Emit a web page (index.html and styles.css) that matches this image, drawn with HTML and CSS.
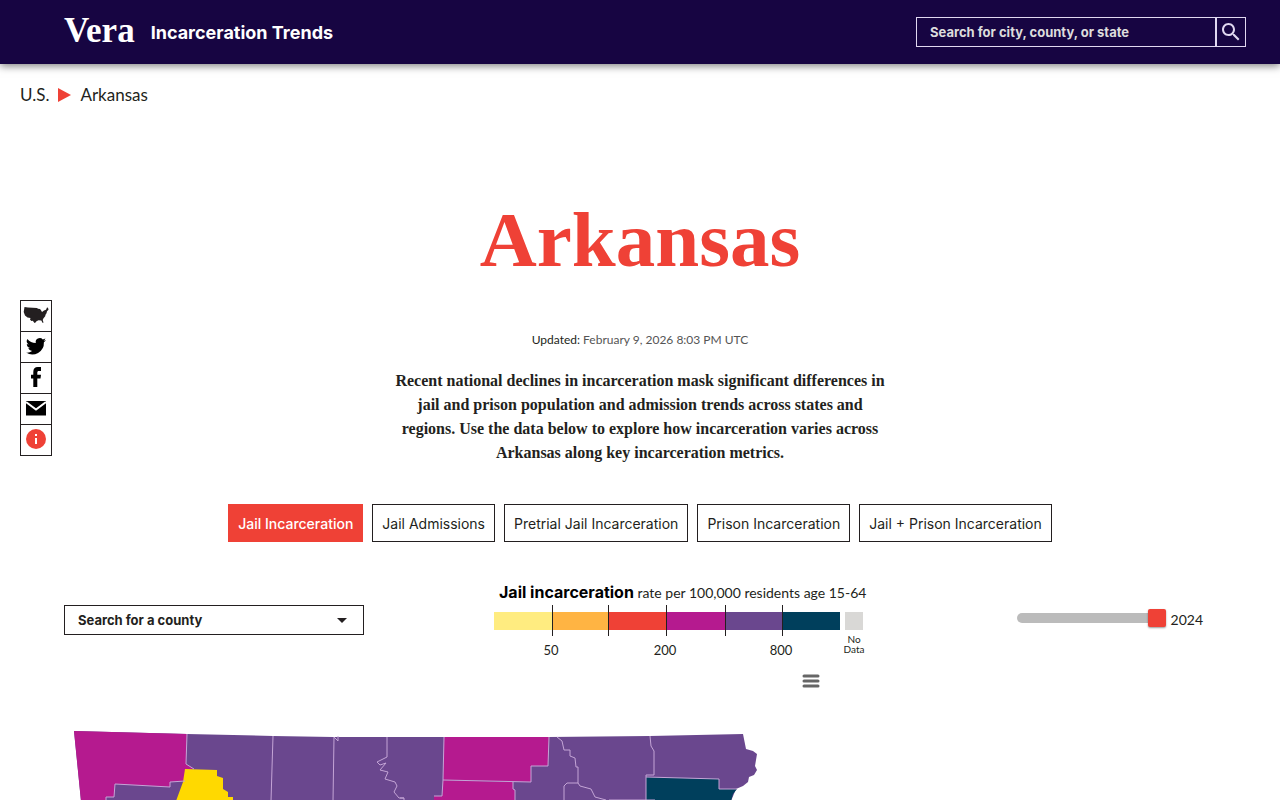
FILE: index.html
```html
<!DOCTYPE html>
<html lang="en">
<head>
    <meta charset="UTF-8">
    <meta name="viewport" content="width=device-width, initial-scale=1.0">
    <title>Arkansas - Incarceration Trends</title>
    <link rel="stylesheet" href="styles.css">
</head>
<body>
    <header class="header">
        <a class="logo" href="#">Vera</a>
        <a class="site-name" href="#">Incarceration Trends</a>
        <form class="search">
            <input type="text" class="search-input" placeholder="Search for city, county, or state" aria-label="Search for city, county, or state">
            <button type="button" class="search-btn" aria-label="Search">
                <svg width="24" height="24" viewBox="0 0 24 24" fill="currentColor"><path d="M15.5 14h-.79l-.28-.27C15.41 12.59 16 11.11 16 9.5 16 5.91 13.09 3 9.5 3S3 5.91 3 9.5 5.91 16 9.5 16c1.61 0 3.09-.59 4.23-1.57l.27.28v.79l5 4.99L20.49 19l-4.99-5zm-6 0C7.01 14 5 11.99 5 9.5S7.01 5 9.5 5 14 7.01 14 9.5 11.99 14 9.5 14z"/></svg>
            </button>
        </form>
    </header>

    <nav class="breadcrumb">
        <a href="#">U.S.</a>
        <span class="arrow"></span>
        <a href="#">Arkansas</a>
    </nav>

    <div class="share">
        <a href="#" aria-label="National map">
            <svg width="26" height="20" viewBox="0 0 26 20" fill="#231f20"><path d="M1.500 1L5 1.500 14 2l1 .7 2 .3 1 1.300 1 1.700 2-1.500 2-.8 1-2.200 1 .2.500 2-1.500 1.500-.5 2-1 1.500-.3 1.600-1.700 2-.8 1.700.8 2.500-.8.500-1.400-2.500-2.800-.3-2 1-1.500 1.800-.7-.2-1.500-2-1.500.3-1.300-1.600L7.500 12 4.500 11.500 2 9.500.7 6z"/></svg>
        </a>
        <a href="#" aria-label="Twitter">
            <svg width="24" height="24" viewBox="0 0 24 24"><path d="M22 5c-.7.300-1.500.6-2.400.7.900-.5 1.500-1.300 1.800-2.300-.8.500-1.700.8-2.600 1a4.100 4.100 0 0 0-7 3.700C8.400 7.900 5.400 6.300 3.400 3.900a4.100 4.100 0 0 0 1.300 5.500c-.7 0-1.300-.2-1.900-.5 0 2 1.400 3.700 3.300 4.100-.6.200-1.200.2-1.800.1.500 1.600 2 2.800 3.800 2.800A8.200 8.200 0 0 1 2 17.600a11.600 11.600 0 0 0 17.900-10.300c.8-.6 1.500-1.400 2.100-2.300z"/></svg>
        </a>
        <a href="#" aria-label="Facebook">
            <svg width="12" height="22" viewBox="0 0 12 22"><path d="M3.300 20v-8.500H1V7.700h2.300V5C3.300 1.800 4.900 0 7.800 0H11v3.900H9C7.700 3.900 7.300 4.400 7.300 5.500v2.200H11l-.5 3.800H7.300V20z"/></svg>
        </a>
        <a href="#" aria-label="Email">
            <svg width="20" height="18" viewBox="0 0 20 18"><path d="M0 1h20v14.500H0z"/><path d="M0 2l10 7.500L20 2" fill="none" stroke="#fff" stroke-width="2"/></svg>
        </a>
        <a href="#" aria-label="About">
            <svg width="20" height="22" viewBox="0 0 20 22"><circle cx="10" cy="10" r="10" fill="#ef4136"/><path d="M9 5h2v2H9zM9 9h2v6H9z" fill="#fff"/></svg>
        </a>
    </div>

    <main class="container">
        <h1>Arkansas</h1>
        <p class="updated"><span>Updated:</span> February 9, 2026 8:03 PM UTC</p>
        <p class="intro">Recent national declines in incarceration mask significant differences in<br>jail and prison population and admission trends across states and<br>regions. Use the data below to explore how incarceration varies across<br>Arkansas along key incarceration metrics.</p>

        <div class="tabs">
            <button class="active">Jail Incarceration</button>
            <button>Jail Admissions</button>
            <button>Pretrial Jail Incarceration</button>
            <button>Prison Incarceration</button>
            <button>Jail + Prison Incarceration</button>
        </div>

        <div class="controls">
            <select class="county" aria-label="Search for a county">
                <option>Search for a county</option>
            </select>

            <div class="legend">
                <p class="legend-title"><strong>Jail incarceration</strong> rate per 100,000 residents age 15-64</p>
                <div class="legend-row">
                    <div class="scale">
                        <div class="step yellow"><span>50</span></div>
                        <div class="step orange"></div>
                        <div class="step red"><span>200</span></div>
                        <div class="step magenta"></div>
                        <div class="step purple"><span>800</span></div>
                        <div class="step teal"></div>
                    </div>
                    <div class="no-data">No<br>Data</div>
                </div>
            </div>

            <div class="year">
                <input type="range" id="year" min="1970" max="2024" value="2024">
                <label for="year">2024</label>
            </div>
        </div>

        <div class="chart">
            <button class="menu-btn" aria-label="Chart menu">
                <svg width="18" height="14" viewBox="0 0 18 14" stroke="#666" stroke-width="3" stroke-linecap="round"><path d="M2 2h14M2 7h14M2 12h14"/></svg>
            </button>
            <svg class="map" viewBox="64 720 756 80" role="img" aria-label="Map of Arkansas counties">
                <path class="purple" d="M74 730L187 733 273 735 333 736 444 736 549 736 650 735 743 733 746 748 753 750 757 753 755 765 757 769 754 774 749 776 748 781 743 785 736 788 731 800H81z"/>
                <path class="magenta" d="M74 730L187 733 186 763 194 768H185V780L170 781V786L115 783 114 796H106V800H81z"/>
                <path class="gold" d="M185 768L217 769V775L223 777V788L228 791V796H233V800H176L183 781z"/>
                <path class="magenta" d="M444 736H549L548 765H531V781L443 779z"/>
                <path class="magenta" d="M443 779L513 781V788L515 789V800H434V795H442z"/>
                <path class="teal" d="M646 776L719 778V788H737L733 793 731 800H646z"/>
                <g class="borders">
                    <path d="M187 733L186 763 194 768"/>
                    <path d="M185 780L170 781V786L115 783 114 796H106V800"/>
                    <path d="M273 735L271 800"/>
                    <path d="M338 735V740L334 736 333 800"/>
                    <path d="M387 736V756L377 761 380 764 386 762 380 769 388 771 385 778 395 781 397 785 394 791 399 797H404V800"/>
                    <path d="M444 736L443 779 442 795H434"/>
                    <path d="M549 736L548 765H531V781L443 779M513 781V788L515 789V800"/>
                    <path d="M557 736L562 740 564 749H570V755L575 757 576 766H578V782L580 785 591 788 595 796 606 799"/>
                    <path d="M578 782H567L564 785V800M400 797H404M609 799H655"/>
                    <path d="M650 735L651 745 654 750V774H646V800M646 776L719 778V788H737"/>
                </g>
            </svg>
        </div>
    </main>
</body>
</html>
```

FILE: styles.css
```css
* {
    box-sizing: border-box;
}
body {
    font-family: Lato, sans-serif;
    font-variant-ligatures: none;
    color: #231f20;
    background-color: white;
    margin: 0;
}
a {
    color: inherit;
    text-decoration: none;
}
button {
    font-family: inherit;
    cursor: pointer;
}
.header {
    height: 64px;
    padding: 0 34px 0 64px;
    display: flex;
    align-items: center;
    gap: 16px;
    background-color: #170542;
    color: white;
    box-shadow: 0 2px 8px rgba(0, 0, 0, 0.5);
}
.logo {
    font-family: "Liberation Serif", serif;
    font-size: 35px;
    line-height: 36px;
    padding-bottom: 2px;
    font-weight: bold;
}
.site-name {
    font-family: Inter, sans-serif;
    font-size: 18px;
    font-weight: bold;
}
.search {
    margin-left: auto;
    display: flex;
}
.search-input {
    width: 300px;
    height: 30px;
    padding: 0 13px;
    border: 1px solid #e0d8f0;
    background: none;
    color: white;
    font-family: Inter, sans-serif;
    font-size: 13px;
    font-weight: bold;
}
.search-input::placeholder {
    color: #dddddd;
}
.search-btn {
    width: 30px;
    height: 30px;
    padding: 0;
    display: flex;
    align-items: center;
    justify-content: center;
    border: 1px solid #e0d8f0;
    background: none;
    color: #e0d8f0;
}
.search-btn svg {
    flex: none;
}
.breadcrumb {
    padding: 19px 20px;
    display: flex;
    align-items: center;
    gap: 9px;
    font-size: 17px;
    line-height: 24px;
}
.arrow {
    border-left: 13px solid #ef4136;
    border-top: 7px solid transparent;
    border-bottom: 7px solid transparent;
}
.share {
    position: fixed;
    left: 20px;
    top: 300px;
    width: 32px;
    border: 1px solid #231f20;
}
.share a {
    height: 31px;
    display: flex;
    align-items: center;
    justify-content: center;
    border-bottom: 1px solid #231f20;
}
.share a:last-child {
    height: 30px;
    border-bottom: none;
}
.container {
    padding: 0 64px;
}
h1 {
    margin: 68px 0 0;
    text-align: center;
    font-family: "Liberation Serif", serif;
    font-size: 79px;
    line-height: 92px;
    color: #ef4136;
}
.updated {
    margin: 46px 0 0;
    text-align: center;
    font-size: 12px;
    line-height: 16px;
    color: #555555;
}
.updated span {
    color: #231f20;
}
.intro {
    margin: 21px 0 0;
    text-align: center;
    font-family: "Liberation Serif", serif;
    font-size: 16px;
    font-weight: bold;
    line-height: 24px;
}
.tabs {
    margin-top: 39px;
    display: flex;
    justify-content: center;
    gap: 9px;
}
.tabs button {
    height: 38px;
    padding: 0 9px;
    border: 1px solid #231f20;
    background-color: white;
    color: #231f20;
    font-family: Inter, sans-serif;
    font-size: 14px;
}
.tabs .active {
    border-color: #ef4136;
    background-color: #ef4136;
    color: white;
    font-weight: 500;
}
.controls {
    margin-top: 40px;
    padding-right: 13px;
    display: flex;
    align-items: flex-start;
    gap: 130px;
}
.county {
    appearance: none;
    width: 300px;
    height: 30px;
    margin-top: 23px;
    padding: 0 13px;
    border: 1px solid #231f20;
    border-radius: 0;
    background: white url("data:image/svg+xml,%3Csvg xmlns='http://www.w3.org/2000/svg' width='10' height='5'%3E%3Cpath d='M0 0h10L5 5z' fill='%23231f20'/%3E%3C/svg%3E") no-repeat right 16px center;
    color: #231f20;
    font-family: Inter, sans-serif;
    font-size: 13px;
    font-weight: bold;
}
.legend {
    width: 369px;
}
.legend-title {
    margin: 0 5px;
    font-size: 14px;
    line-height: 20px;
    white-space: nowrap;
}
.legend-title strong {
    color: black;
    font-family: Inter, sans-serif;
    font-size: 16px;
    font-weight: bold;
}
.legend-row {
    margin-top: 9px;
    display: flex;
    gap: 5px;
}
.scale {
    display: grid;
    grid-template-columns: 58px 56px 58px 59px 57px 58px;
}
.step {
    position: relative;
    height: 18px;
}
.step:not(:last-child)::after {
    content: "";
    position: absolute;
    right: -1px;
    top: -7px;
    width: 1px;
    height: 31px;
    background-color: #231f20;
    z-index: 1;
}
.step span {
    position: absolute;
    left: 100%;
    top: 30px;
    width: 40px;
    margin-left: -21px;
    text-align: center;
    font-size: 13px;
    line-height: 16px;
}
.yellow { background-color: #ffec80; }
.orange { background-color: #ffb443; }
.red { background-color: #ef4136; }
.magenta { background-color: #b51a8f; fill: #b51a8f; }
.purple { background-color: #6a478e; fill: #6a478e; }
.teal { background-color: #003f5c; fill: #003f5c; }
.gold { fill: #ffd900; }
.no-data {
    width: 18px;
    display: flex;
    flex-direction: column;
    align-items: center;
    font-size: 10px;
    line-height: 10px;
    text-align: center;
}
.no-data::before {
    content: "";
    width: 18px;
    height: 18px;
    margin-bottom: 4px;
    background-color: #d9d8d6;
}
.year {
    margin: 24px 0 0 auto;
    display: flex;
    align-items: center;
    gap: 5px;
    font-size: 14px;
    line-height: 20px;
}
.year label {
    padding-top: 4px;
}
.year input {
    appearance: none;
    width: 149px;
    height: 10px;
    margin: 0;
    border-radius: 5px;
    background-color: #bbbbbb;
}
.year input::-webkit-slider-thumb {
    appearance: none;
    width: 18px;
    height: 18px;
    border-radius: 2px;
    background-color: #ef4136;
    box-shadow: 0 1px 2px rgba(0, 0, 0, 0.4);
}
.chart {
    width: 756px;
    max-width: 100%;
    margin-top: 20px;
    display: flex;
    flex-direction: column;
    gap: 33px;
}
.menu-btn {
    align-self: flex-end;
    padding: 0;
    display: flex;
    border: none;
    background: none;
}
.map {
    display: block;
}
.borders {
    fill: none;
    stroke: #c4a5d6;
    stroke-width: 1;
}
```
